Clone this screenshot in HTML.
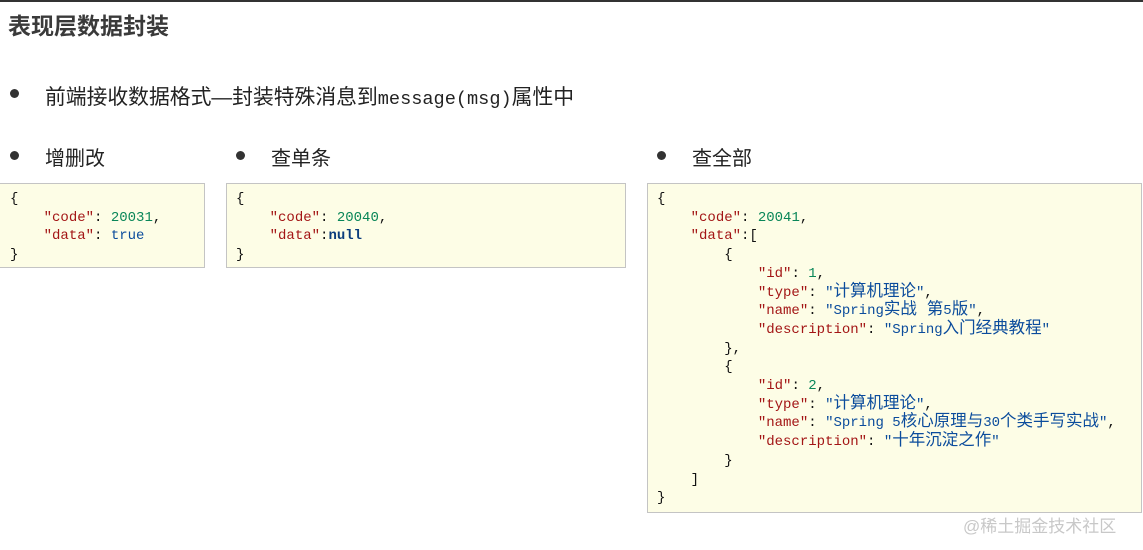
<!DOCTYPE html>
<html><head><meta charset="utf-8"><style>
body{margin:0;width:1143px;height:550px;background:#fff;position:relative;overflow:hidden;font-family:"Liberation Sans","Noto Sans CJK SC",sans-serif;color:#222}
.topline{position:absolute;left:0;top:0;width:1143px;height:2px;background:#333}
.t{position:absolute;white-space:nowrap}
.title{left:8px;top:7px;font-size:23px;font-weight:bold;color:#3a3a3a}
.b{font-size:20px;color:#222}
.dot{position:absolute;width:9px;height:9px;border-radius:50%;background:#333}
.box{position:absolute;background:#fdfde6;border:1px solid #c4c4c4;box-sizing:border-box}
pre{margin:0;position:absolute;left:9px;top:6px;font-family:"Liberation Mono","Noto Sans CJK SC",monospace;font-size:14px;line-height:18.7px;color:#111}
.c{font-size:16.5px;line-height:10px}
.k{color:#a31515}.n{color:#098658}.s{color:#0b4c9c}.kw{color:#0b4c9c}.bold{font-weight:bold;color:#0b3c7c}
.wm{position:absolute;left:963px;top:512px;font-size:17px;color:#c8c8c8}
</style></head><body>
<div class="topline"></div>
<div class="t title">表现层数据封装</div>
<div class="dot" style="left:10px;top:89px"></div>
<div class="t" style="left:45px;top:80px;font-size:20.8px">前端接收数据格式—封装特殊消息到<span style="font-family:'Liberation Mono',monospace;font-size:18.6px">message(msg)</span>属性中</div>
<div class="dot" style="left:10px;top:151px"></div>
<div class="t b" style="left:45px;top:142px">增删改</div>
<div class="dot" style="left:236px;top:151px"></div>
<div class="t b" style="left:271px;top:142px">查单条</div>
<div class="dot" style="left:657px;top:151px"></div>
<div class="t b" style="left:692px;top:142px">查全部</div>

<div class="box" style="left:-2px;top:183px;width:207px;height:85px"><pre style="left:11px">{
    <span class="k">"code"</span>: <span class="n">20031</span>,
    <span class="k">"data"</span>: <span class="kw">true</span>
}</pre></div>
<div class="box" style="left:226px;top:183px;width:400px;height:85px"><pre>{
    <span class="k">"code"</span>: <span class="n">20040</span>,
    <span class="k">"data"</span>:<span class="bold">null</span>
}</pre></div>
<div class="box" style="left:647px;top:183px;width:495px;height:330px"><pre>{
    <span class="k">"code"</span>: <span class="n">20041</span>,
    <span class="k">"data"</span>:[
        {
            <span class="k">"id"</span>: <span class="n">1</span>,
            <span class="k">"type"</span>: <span class="s">"<span class="c">计算机理论</span>"</span>,
            <span class="k">"name"</span>: <span class="s">"Spring<span class="c">实战 第</span>5<span class="c">版</span>"</span>,
            <span class="k">"description"</span>: <span class="s">"Spring<span class="c">入门经典教程</span>"</span>
        },
        {
            <span class="k">"id"</span>: <span class="n">2</span>,
            <span class="k">"type"</span>: <span class="s">"<span class="c">计算机理论</span>"</span>,
            <span class="k">"name"</span>: <span class="s">"Spring 5<span class="c">核心原理与</span>30<span class="c">个类手写实战</span>"</span>,
            <span class="k">"description"</span>: <span class="s">"<span class="c">十年沉淀之作</span>"</span>
        }
    ]
}</pre></div>
<div class="t wm">@稀土掘金技术社区</div>
</body></html>
